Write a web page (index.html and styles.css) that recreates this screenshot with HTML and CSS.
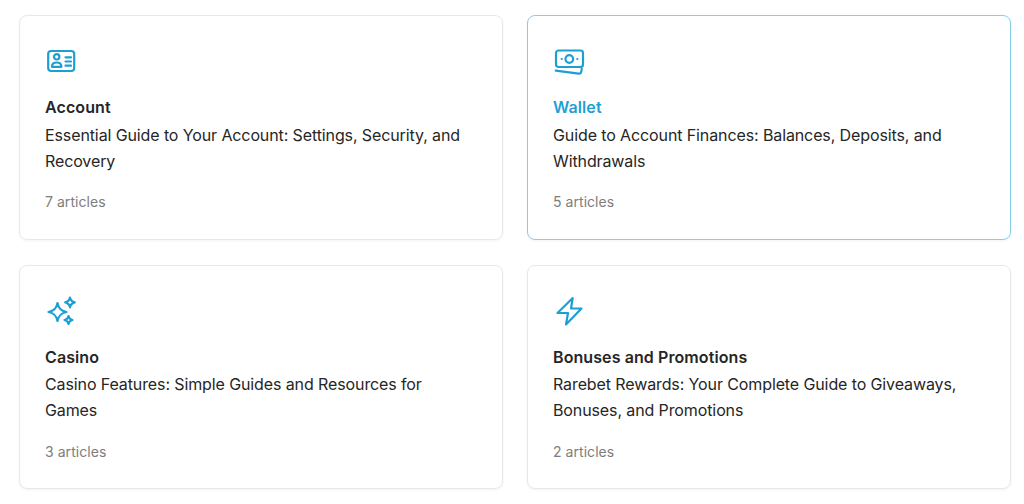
FILE: index.html
```html
<!DOCTYPE html>
<html lang="en">

<head>
    <meta charset="UTF-8">
    <title>Help Center</title>
    <link rel="stylesheet" href="styles.css">
</head>

<body>
    <div class="collections">
        <!-- Account -->
        <a class="card" href="#">
            <svg class="card-icon" viewBox="0 0 32 32" fill="none" stroke="currentColor" stroke-width="2.2" stroke-linecap="round" stroke-linejoin="round">
                <rect x="3.2" y="5" width="26" height="20" rx="3"/>
                <circle cx="11.7" cy="10.8" r="2.7"/>
                <path d="M7 20.800c0-3 2-4.300 4.700-4.300s4.700 1.300 4.700 4.300z"/>
                <path d="M20.500 11.300h5.500M20.500 15.500h5.500M20.500 19.700h5.500"/>
            </svg>
            <h3 class="card-title">Account</h3>
            <p class="card-desc">Essential Guide to Your Account: Settings, Security, and Recovery</p>
            <p class="card-count">7 articles</p>
        </a>
        <!-- Wallet, shown hovered -->
        <a class="card card-hover" href="#">
            <svg class="card-icon" viewBox="0 0 32 32" fill="none" stroke="currentColor" stroke-width="2.2" stroke-linecap="round" stroke-linejoin="round">
                <rect x="3" y="4.500" width="27" height="16.500" rx="2.500"/>
                <circle cx="16.300" cy="13" r="3.800"/>
                <path d="M8.700 13h.1M24.300 13h.1"/>
                <path d="M2.700 24.700l23 3c1.800 .2 3-1.500 3-5"/>
            </svg>
            <h3 class="card-title">Wallet</h3>
            <p class="card-desc">Guide to Account Finances: Balances, Deposits, and Withdrawals</p>
            <p class="card-count">5 articles</p>
        </a>
        <!-- Casino -->
        <a class="card" href="#">
            <svg class="card-icon" viewBox="0 0 32 32" fill="none" stroke="currentColor" stroke-width="2.2" stroke-linejoin="round">
                <path d="M12.500 7c1 5.500 3.200 7.800 9 9-5.800 1.200-8 3.500-9 9-1-5.500-3.200-7.800-9-9 5.800-1.200 8-3.500 9-9z"/>
                <path d="M25 1.500c.6 3 1.800 4.200 4.800 4.900-3 .7-4.200 1.900-4.800 4.900-.6-3-1.800-4.200-4.800-4.900 3-.7 4.200-1.900 4.800-4.900z"/>
                <path d="M23.500 20c.5 2.500 1.500 3.500 4 4-2.500.5-3.500 1.500-4 4-.5-2.500-1.500-3.500-4-4 2.500-.5 3.500-1.500 4-4z"/>
            </svg>
            <h3 class="card-title">Casino</h3>
            <p class="card-desc">Casino Features: Simple Guides and Resources for Games</p>
            <p class="card-count">3 articles</p>
        </a>
        <!-- Bonuses -->
        <a class="card" href="#">
            <svg class="card-icon" viewBox="0 0 32 32" fill="none" stroke="currentColor" stroke-width="2.2" stroke-linejoin="round">
                <path d="M19.700 2L4.500 17H15l-2 11.500L28.500 12.500H18z"/>
            </svg>
            <h3 class="card-title">Bonuses and Promotions</h3>
            <p class="card-desc">Rarebet Rewards: Your Complete Guide to Giveaways, Bonuses, and Promotions</p>
            <p class="card-count">2 articles</p>
        </a>
    </div>
</body>

</html>
```

FILE: styles.css
```css
/* Basic reset */
body,
html {
    margin: 0;
    padding: 0;
    height: 100%;
    overflow: hidden;
    background: #fff;
    font-family: Inter, "Liberation Sans", sans-serif;
}

/* Two column grid of collections */
.collections {
    display: grid;
    grid-template-columns: 484px 484px;
    grid-auto-rows: 224.5px;
    gap: 25px 24px;
    padding: 15px 13px 0 19px;
}

.card {
    display: block;
    box-sizing: border-box;
    padding: 30px 25px 0;
    border: 1px solid #e8e8e8;
    border-radius: 8px;
    box-shadow: 0 1px 3px rgba(0, 0, 0, 0.05);
    color: #262626;
    text-decoration: none;
}

.card-icon {
    display: block;
    width: 32px;
    height: 32px;
    color: #1e9fd4;
}

.card-title {
    margin: 17px 0 0;
    font-size: 16px;
    font-weight: 600;
    line-height: 24px;
    letter-spacing: 0.09px;
}

.card-desc {
    margin: 2.8px 0 0;
    font-size: 16px;
    line-height: 26px;
    letter-spacing: -0.11px;
}

.card-count {
    margin: 16.4px 0 0;
    font-size: 14px;
    line-height: 24px;
    color: #7d7d7d;
    letter-spacing: 0.05px;
}

/* Hover state of a card */
.card-hover {
    border-color: #86cfe9;
}

.card-hover .card-title {
    color: #1e9fd4;
}
```
